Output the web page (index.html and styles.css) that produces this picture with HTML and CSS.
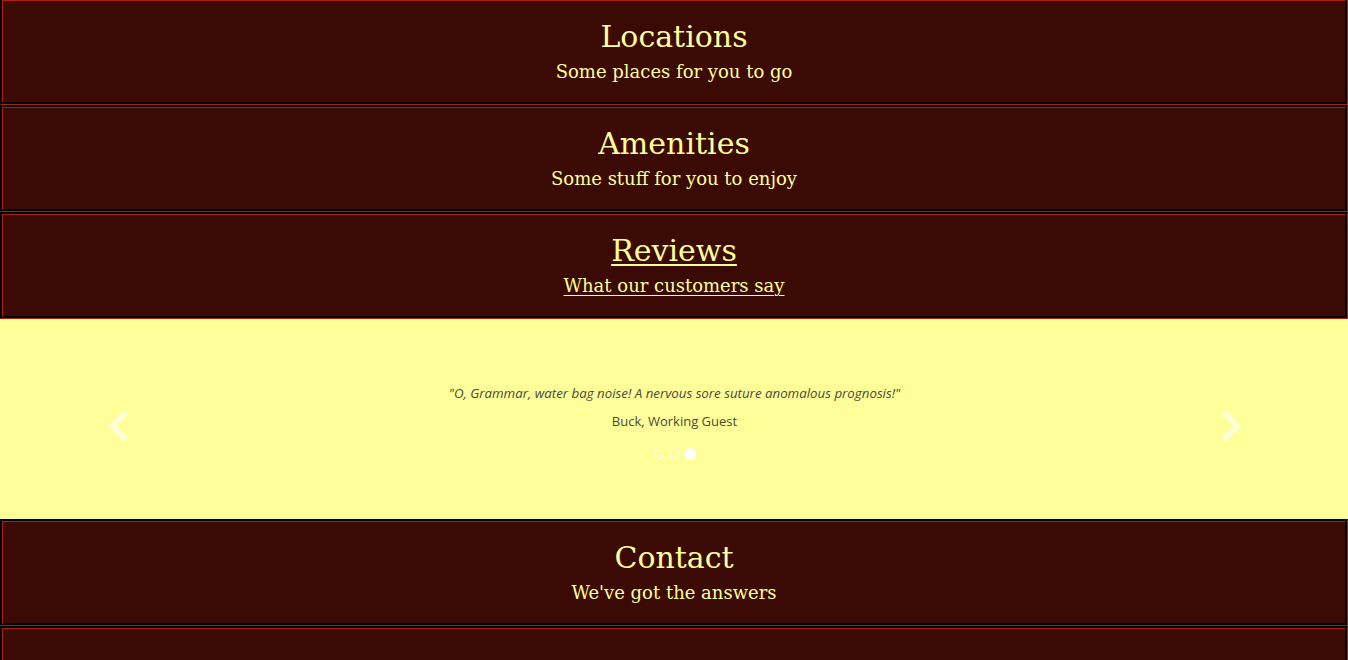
FILE: index.html
```html
<!DOCTYPE html>
<html lang="en">
<head>
<meta charset="utf-8">
<title>Hotel</title>
<link rel="stylesheet" href="styles.css">
</head>
<body>
<main class="page">
  <section class="panel">
    <h2 class="panel-title">Locations</h2>
    <p class="panel-sub">Some places for you to go</p>
  </section>
  <section class="panel">
    <h2 class="panel-title">Amenities</h2>
    <p class="panel-sub">Some stuff for you to enjoy</p>
  </section>
  <section class="panel">
    <h2 class="panel-title"><a class="panel-link" href="#reviews">Reviews</a></h2>
    <p class="panel-sub"><a class="panel-link" href="#reviews">What our customers say</a></p>
  </section>
  <section class="carousel" id="reviews">
    <span class="arrow arrow-left">
      <svg width="20" height="30" viewBox="0 0 20 30"><path d="M17 3 L5 15 L17 27" fill="none" stroke="#ffffff" stroke-width="6" stroke-linecap="square"/></svg>
    </span>
    <div class="slide">
      <p class="quote">"O, Grammar, water bag noise! A nervous sore suture anomalous prognosis!"</p>
      <p class="author">Buck, Working Guest</p>
      <div class="dots">
        <span class="dot"></span>
        <span class="dot"></span>
        <span class="dot dot-active"></span>
      </div>
    </div>
    <span class="arrow arrow-right">
      <svg width="20" height="30" viewBox="0 0 20 30"><path d="M3 3 L15 15 L3 27" fill="none" stroke="#ffffff" stroke-width="6" stroke-linecap="square"/></svg>
    </span>
  </section>
  <section class="panel">
    <h2 class="panel-title">Contact</h2>
    <p class="panel-sub">We've got the answers</p>
  </section>
  <section class="panel panel-empty"></section>
</main>
</body>
</html>
```

FILE: styles.css
```css
html, body {
  margin: 0;
  padding: 0;
  background: #0e0200;
}
body {
  font-family: "DejaVu Serif", "Liberation Serif", serif;
  overflow: hidden;
}
.page {
  display: flex;
  flex-direction: column;
  margin-top: -2px;
}
.panel {
  background: #3b0a04;
  border: 3px groove #581106;
  padding: 18px 0 19px;
  display: flex;
  flex-direction: column;
  align-items: center;
  gap: 6px;
  color: #ffff99;
}
.panel-empty {
  height: 64px;
}
.panel-title {
  margin: 0;
  font-size: 30px;
  line-height: 36px;
  font-weight: normal;
}
.panel-sub {
  margin: 0;
  font-size: 18px;
  line-height: 22px;
}
.panel-link {
  color: #ffff99;
  text-decoration: underline;
  text-decoration-thickness: 2px;
  text-underline-offset: 3px;
}
.panel-sub .panel-link {
  text-decoration-thickness: 1px;
}
.carousel {
  background: #ffff99;
  height: 200px;
  display: flex;
  align-items: center;
  padding: 0 106px 0 107px;
}
.arrow {
  width: 20px;
  height: 30px;
  margin-top: 14px;
  opacity: 0.6;
}
.arrow svg {
  display: block;
}
.slide {
  flex: 1;
  display: flex;
  flex-direction: column;
  align-items: center;
  font-family: "Open Sans", "Noto Sans", sans-serif;
  color: #4a4a3a;
  font-size: 13px;
  padding-top: 6px;
}
.quote {
  margin: 0;
  font-style: italic;
  font-size: 13.3px;
  line-height: 18px;
}
.author {
  margin: 10px 0 0;
  line-height: 18px;
}
.dots {
  display: flex;
  align-items: center;
  gap: 5px;
  margin-top: 18px;
}
.dot {
  width: 8px;
  height: 8px;
  border: 1px solid #ffffff;
  border-radius: 50%;
}
.dot-active {
  width: 12px;
  height: 12px;
  border: 0;
  background: #ffffff;
}
```
